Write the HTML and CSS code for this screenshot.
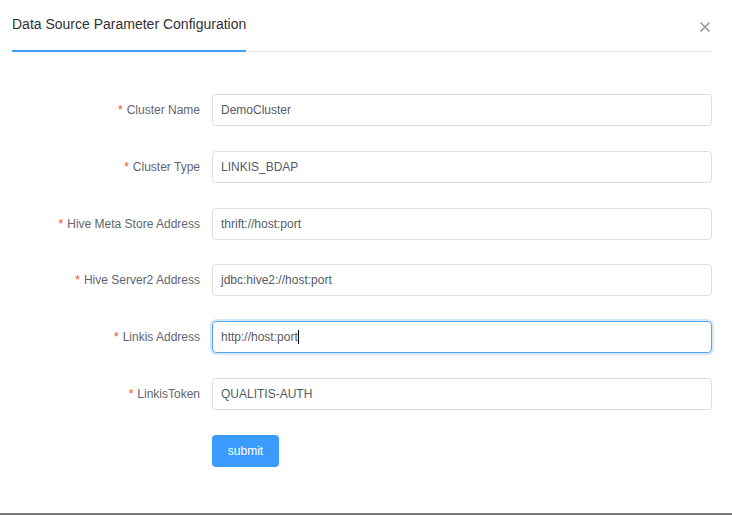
FILE: index.html
```html
<!DOCTYPE html>
<html>
<head>
<meta charset="utf-8">
<link rel="stylesheet" href="styles.css">
</head>
<body>
<div class="modal">
  <div class="header">
    <div class="tabs">
      <div class="tab active">Data Source Parameter Configuration</div>
    </div>
    <span class="close">
      <svg width="12" height="12" viewBox="0 0 12 12"><path d="M1.5 1.5 L10.5 10.5 M10.5 1.5 L1.5 10.5" stroke="#999" stroke-width="1.6" fill="none"/></svg>
    </span>
  </div>
  <form class="form">
    <div class="row"><label class="label"><span class="req">*</span>Cluster Name</label><div class="input">DemoCluster</div></div>
    <div class="row"><label class="label"><span class="req">*</span>Cluster Type</label><div class="input">LINKIS_BDAP</div></div>
    <div class="row"><label class="label"><span class="req">*</span>Hive Meta Store Address</label><div class="input">thrift://host:port</div></div>
    <div class="row"><label class="label"><span class="req">*</span>Hive Server2 Address</label><div class="input">jdbc:hive2://host:port</div></div>
    <div class="row"><label class="label"><span class="req">*</span>Linkis Address</label><div class="input focus">http://host:port<span class="caret"></span></div></div>
    <div class="row"><label class="label"><span class="req">*</span>LinkisToken</label><div class="input">QUALITIS-AUTH</div></div>
    <div class="row"><span class="label"></span><button type="button" class="btn">submit</button></div>
  </form>
</div>
</body>
</html>
```
FILE: styles.css
```css
html, body {
  margin: 0;
  padding: 0;
  background: #fff;
}
body {
  font-family: "Liberation Sans", Arial, sans-serif;
  width: 732px;
  height: 515px;
  overflow: hidden;
}
.modal {
  height: 513px;
  border-bottom: 2px solid #7a7a7a;
  background: #fff;
  box-sizing: content-box;
}
.header {
  position: relative;
  padding: 0 20px 0 12px;
}
.tabs {
  border-bottom: 1px solid #e3e6eb;
  display: flex;
  padding-top: 14px;
}
.tab {
  font-size: 14px;
  color: #303133;
  line-height: 20px;
  padding-bottom: 16px;
  border-bottom: 2px solid #409eff;
  margin-bottom: -1px;
}
.close {
  position: absolute;
  top: 21px;
  right: 21px;
  width: 12px;
  height: 12px;
  display: flex;
}
.form {
  display: flex;
  flex-direction: column;
  gap: 24.8px;
  padding: 42px 20px 0 0;
}
.row {
  display: flex;
  align-items: center;
  height: 32px;
}
.label {
  width: 200px;
  box-sizing: border-box;
  text-align: right;
  font-size: 12px;
  color: #5f6570;
  margin-right: 12px;
}
.req {
  color: #f0501a;
  margin-right: 4px;
}
.input {
  flex: 1;
  height: 32px;
  box-sizing: border-box;
  border: 1px solid #dcdee2;
  border-radius: 4px;
  padding: 0 8px;
  font-size: 12px;
  color: #555b66;
  display: flex;
  align-items: center;
}
.input.focus {
  border-color: #57a3f3;
  box-shadow: 0 0 0 2px rgba(45, 140, 240, 0.2);
}
.caret {
  display: inline-block;
  width: 1px;
  height: 14px;
  background: #000;
}
.btn {
  width: 67px;
  height: 32px;
  border: none;
  border-radius: 4px;
  background: #3a9bfd;
  color: #fff;
  font-family: "Liberation Sans", Arial, sans-serif;
  font-size: 12px;
  padding: 0;
}
```
